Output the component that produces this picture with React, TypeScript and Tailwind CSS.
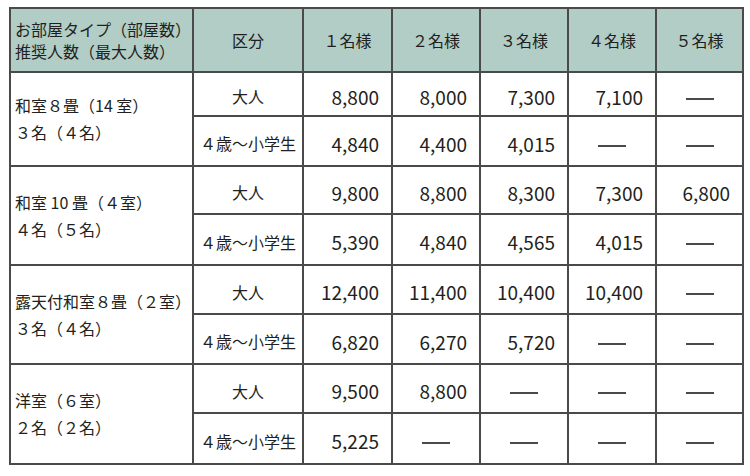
const groups = [
  {
    label: ['和室８畳（14 室）', '３名（４名）'],
    rows: [
      { kind: '大人', prices: ['8,800', '8,000', '7,300', '7,100', ''], h: 'h-[44px]' },
      { kind: '４歳〜小学生', prices: ['4,840', '4,400', '4,015', '', ''], h: 'h-[50px]' },
    ],
  },
  {
    label: ['和室 10 畳（４室）', '４名（５名）'],
    rows: [
      { kind: '大人', prices: ['9,800', '8,800', '8,300', '7,300', '6,800'], h: 'h-[48px]' },
      { kind: '４歳〜小学生', prices: ['5,390', '4,840', '4,565', '4,015', ''], h: 'h-[51px]' },
    ],
  },
  {
    label: ['露天付和室８畳（２室）', '３名（４名）'],
    rows: [
      { kind: '大人', prices: ['12,400', '11,400', '10,400', '10,400', ''], h: 'h-[49px]' },
      { kind: '４歳〜小学生', prices: ['6,820', '6,270', '5,720', '', ''], h: 'h-[50px]' },
    ],
  },
  {
    label: ['洋室（６室）', '２名（２名）'],
    rows: [
      { kind: '大人', prices: ['9,500', '8,800', '', '', ''], h: 'h-[49px]' },
      { kind: '４歳〜小学生', prices: ['5,225', '', '', '', ''], h: 'h-[51px]' },
    ],
  },
];

const heads = ['１名様', '２名様', '３名様', '４名様', '５名様'];

// em dash cells are drawn as a plain rule
function Dash() {
  return <span className="inline-block w-[28px] h-[2px] bg-[#4a4a4a] align-middle" />;
}

export default function App() {
  return (
    <div
      className="w-[750px] h-[476px] bg-white pt-[7px] pl-[9px] text-[#231f20]"
      style={{ fontFamily: '"Noto Sans CJK JP", "Noto Sans", sans-serif' }}
    >
      <table className="table-fixed border-collapse border-2 border-[#5a5a5a] text-[16px] leading-none">
        <colgroup>
          <col className="w-[183px]" />
          <col className="w-[110px]" />
          <col className="w-[89px]" />
          <col className="w-[88px]" />
          <col className="w-[88px]" />
          <col className="w-[88px]" />
          <col className="w-[87px]" />
        </colgroup>
        <thead>
          <tr className="h-[64px] bg-[#b2cdc6]">
            <th className="border-2 border-[#4a4a4a] px-[4px] text-left font-normal leading-[22px]">
              <div>お部屋タイプ（部屋数）</div>
              <div>推奨人数（最大人数）</div>
            </th>
            <th className="border-2 border-[#4a4a4a] font-normal">区分</th>
            {heads.map((h) => (
              <th key={h} className="border-2 border-[#4a4a4a] font-normal">
                {h}
              </th>
            ))}
          </tr>
        </thead>
        <tbody>
          {groups.map((g) =>
            g.rows.map((r, i) => (
              <tr key={g.label[0] + r.kind} className={r.h}>
                {i === 0 && (
                  <td rowSpan={2} className="border-2 border-[#4a4a4a] px-[4px] leading-[27px]">
                    <div>{g.label[0]}</div>
                    <div>{g.label[1]}</div>
                  </td>
                )}
                <td className="border-2 border-[#4a4a4a] text-center pt-[4px]">{r.kind}</td>
                {r.prices.map((p, j) => (
                  <td
                    key={j}
                    className={`border-2 border-[#4a4a4a] pt-[4px] ${p ? 'text-right pr-[12px] text-[19px]' : 'text-center'}`}
                  >
                    {p ? p : <Dash />}
                  </td>
                ))}
              </tr>
            ))
          )}
        </tbody>
      </table>
    </div>
  );
}
